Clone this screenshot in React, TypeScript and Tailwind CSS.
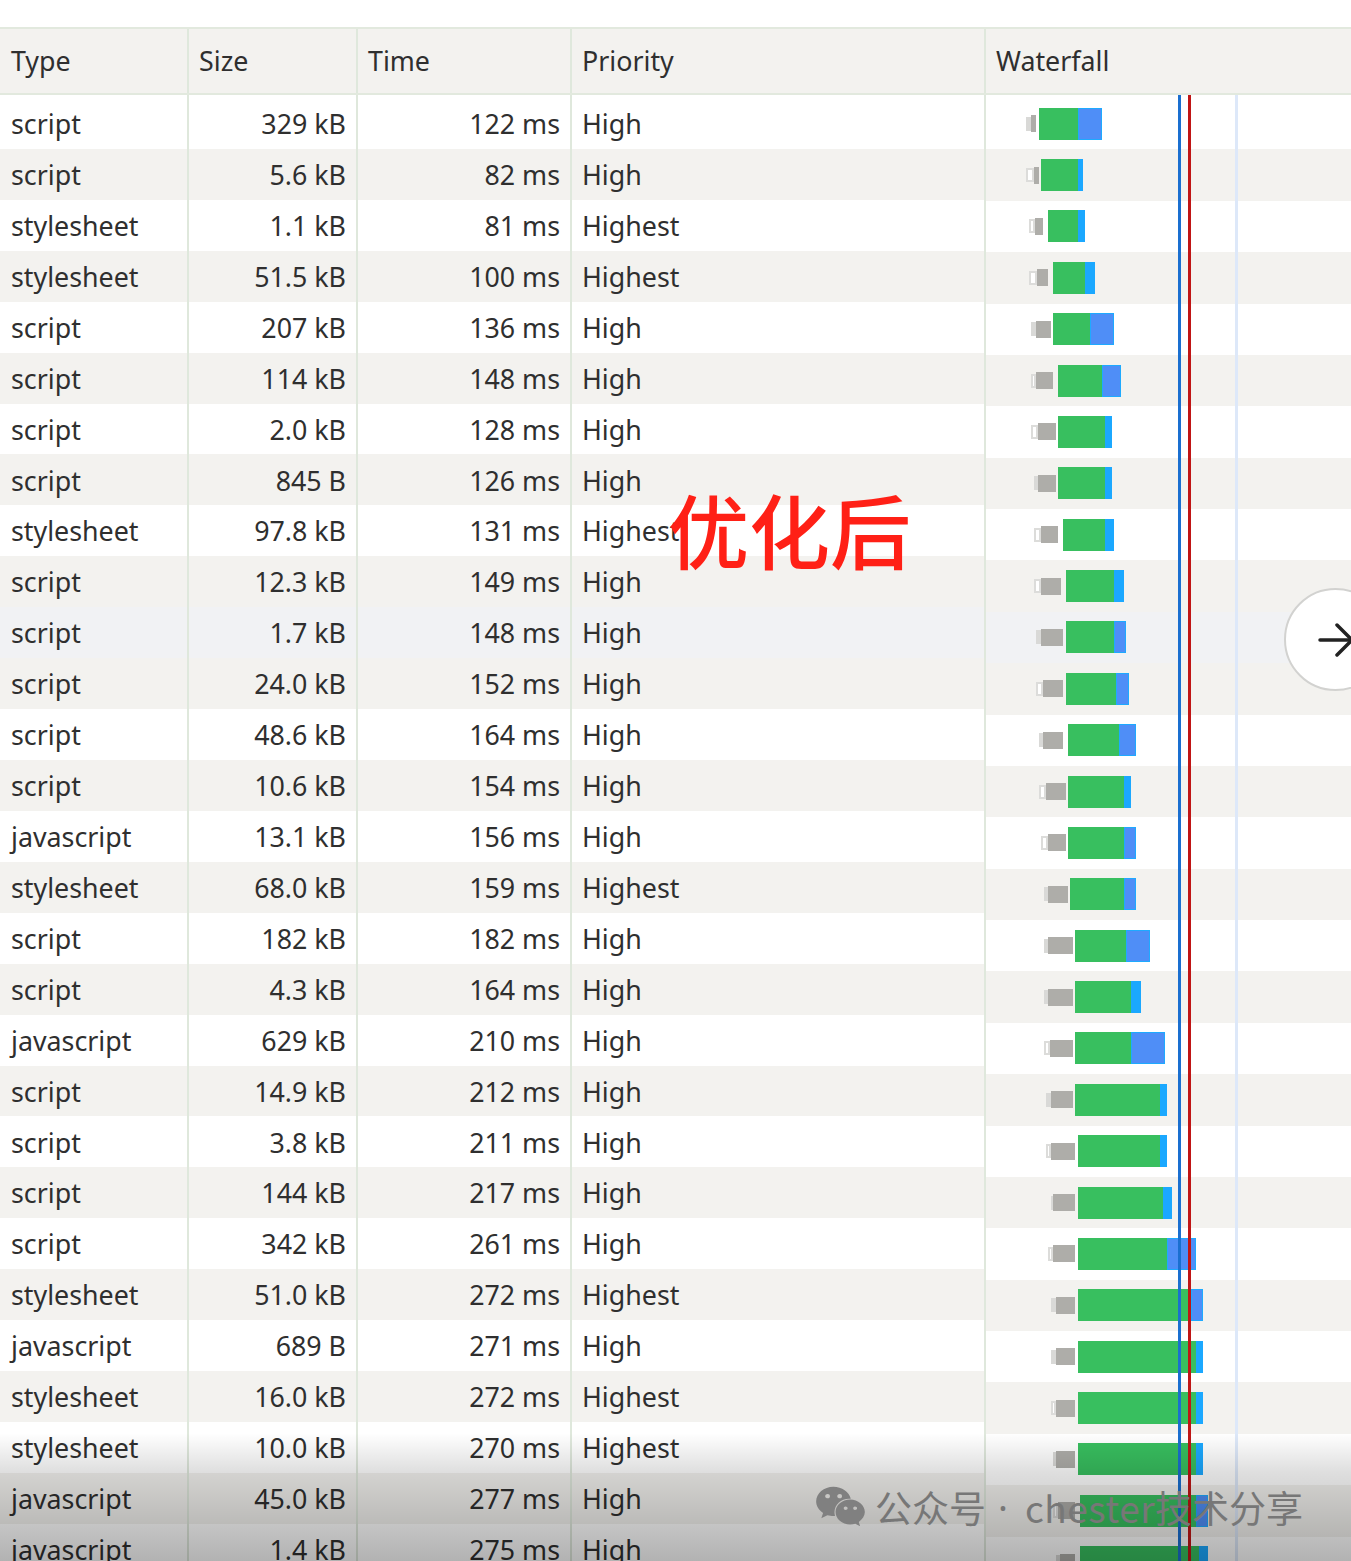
import { FaWeixin } from "react-icons/fa"

// type, size, time, priority, then waterfall: kind, light start, gray start, gray end, green start, green end, blue end
type Row = [string, string, string, string, "solid" | "ring", number, number, number, number, number, number]

const rows: Row[] = [
  ["script", "329 kB", "122 ms", "High", "solid", 1026, 1031, 1036, 1039, 1078, 1102],
  ["script", "5.6 kB", "82 ms", "High", "ring", 1026, 1034, 1039, 1041, 1078, 1083],
  ["stylesheet", "1.1 kB", "81 ms", "Highest", "ring", 1029, 1035, 1043, 1048, 1078, 1085],
  ["stylesheet", "51.5 kB", "100 ms", "Highest", "ring", 1029, 1037, 1048, 1053, 1085, 1095],
  ["script", "207 kB", "136 ms", "High", "solid", 1031, 1036, 1051, 1053, 1090, 1114],
  ["script", "114 kB", "148 ms", "High", "ring", 1031, 1036, 1053, 1058, 1102, 1121],
  ["script", "2.0 kB", "128 ms", "High", "ring", 1031, 1038, 1056, 1058, 1105, 1112],
  ["script", "845 B", "126 ms", "High", "solid", 1034, 1038, 1056, 1058, 1105, 1112],
  ["stylesheet", "97.8 kB", "131 ms", "Highest", "ring", 1034, 1041, 1058, 1063, 1105, 1114],
  ["script", "12.3 kB", "149 ms", "High", "ring", 1034, 1041, 1061, 1066, 1114, 1124],
  ["script", "1.7 kB", "148 ms", "High", "solid", 1036, 1041, 1063, 1066, 1114, 1126],
  ["script", "24.0 kB", "152 ms", "High", "ring", 1036, 1043, 1063, 1066, 1116, 1129],
  ["script", "48.6 kB", "164 ms", "High", "solid", 1039, 1043, 1063, 1068, 1119, 1136],
  ["script", "10.6 kB", "154 ms", "High", "ring", 1039, 1046, 1066, 1068, 1124, 1131],
  ["javascript", "13.1 kB", "156 ms", "High", "ring", 1041, 1048, 1066, 1068, 1124, 1136],
  ["stylesheet", "68.0 kB", "159 ms", "Highest", "solid", 1044, 1048, 1068, 1070, 1124, 1136],
  ["script", "182 kB", "182 ms", "High", "solid", 1044, 1048, 1073, 1075, 1126, 1150],
  ["script", "4.3 kB", "164 ms", "High", "solid", 1044, 1048, 1073, 1075, 1131, 1141],
  ["javascript", "629 kB", "210 ms", "High", "ring", 1044, 1050, 1073, 1075, 1131, 1165],
  ["script", "14.9 kB", "212 ms", "High", "solid", 1046, 1051, 1073, 1075, 1160, 1167],
  ["script", "3.8 kB", "211 ms", "High", "ring", 1046, 1051, 1075, 1078, 1160, 1167],
  ["script", "144 kB", "217 ms", "High", "solid", 1051, 1053, 1075, 1078, 1163, 1172],
  ["script", "342 kB", "261 ms", "High", "ring", 1048, 1053, 1075, 1078, 1167, 1196],
  ["stylesheet", "51.0 kB", "272 ms", "Highest", "solid", 1051, 1056, 1075, 1078, 1191, 1203],
  ["javascript", "689 B", "271 ms", "High", "solid", 1051, 1056, 1075, 1078, 1196, 1203],
  ["stylesheet", "16.0 kB", "272 ms", "Highest", "ring", 1051, 1056, 1075, 1078, 1196, 1203],
  ["stylesheet", "10.0 kB", "270 ms", "Highest", "solid", 1053, 1056, 1075, 1078, 1196, 1203],
  ["javascript", "45.0 kB", "277 ms", "High", "ring", 1053, 1058, 1075, 1080, 1196, 1208],
  ["javascript", "1.4 kB", "275 ms", "High", "solid", 1056, 1060, 1075, 1080, 1199, 1208],
]

const HOVER = 10
const line = "border-r-2 border-[#dfe8dc]"

function band(i: number) {
  if (i === HOVER) return "bg-[#f1f2f4]"
  return i % 2 === 1 ? "bg-[#f3f2ef]" : "bg-white"
}

function Bar({ r }: { r: Row }) {
  const [, , , , kind, light, gray, grayEnd, green, greenEnd, blueEnd] = r
  const blue = blueEnd - greenEnd
  return (
    <div className="flex items-center" style={{ marginLeft: light - 986 }}>
      {kind === "ring" ? (
        <div className="h-[14px] border-2 border-[#dcdcda] bg-white" style={{ width: gray - light }} />
      ) : (
        <div className="h-[14px] bg-[#d9d9d7]" style={{ width: gray - light }} />
      )}
      <div className="h-[17px] bg-[#aeada9]" style={{ width: grayEnd - gray }} />
      <div style={{ width: green - grayEnd }} />
      <div className="h-[32px] bg-[#38bf5f]" style={{ width: greenEnd - green }} />
      <div
        className={blue < 12 ? "h-[32px] bg-[#1ba8ff]" : "h-[32px] border border-[#1eaaff] bg-[#4f8ef7]"}
        style={{ width: blue }}
      />
    </div>
  )
}

export default function App() {
  return (
    <div className="relative h-[1561px] w-[1351px] overflow-hidden bg-white pt-[27px] font-['Noto_Sans',sans-serif] text-[26.8px] text-[#2f2f2f]">
      <div className="flex h-[68px] items-stretch border-y-2 border-[#e2e9de] bg-[#f3f2ef]">
        <div className={`w-[189px] pl-[11px] leading-[64px] ${line}`}>Type</div>
        <div className={`w-[169px] pl-[10px] leading-[64px] ${line}`}>Size</div>
        <div className={`w-[214px] pl-[10px] leading-[64px] ${line}`}>Time</div>
        <div className={`w-[414px] pl-[10px] leading-[64px] ${line}`}>Priority</div>
        <div className="flex-1 pl-[10px] leading-[64px]">Waterfall</div>
      </div>

      <div className="flex">
        <div className="w-[986px] shrink-0">
          <div className="flex h-[3px]">
            <div className={`w-[189px] ${line}`} />
            <div className={`w-[169px] ${line}`} />
            <div className={`w-[214px] ${line}`} />
            <div className={`w-[414px] ${line}`} />
          </div>
          {rows.map((r, i) => (
            <div key={i} className={`flex h-[50.93px] items-center leading-none ${band(i)}`}>
              <div className={`flex h-full w-[189px] items-center pl-[11px] pt-[2px] ${line}`}>{r[0]}</div>
              <div className={`flex h-full w-[169px] items-center justify-end pr-[10px] pt-[2px] ${line}`}>{r[1]}</div>
              <div className={`flex h-full w-[214px] items-center justify-end pr-[10px] pt-[2px] ${line}`}>{r[2]}</div>
              <div className={`flex h-full w-[414px] items-center pl-[10px] pt-[2px] ${line}`}>{r[3]}</div>
            </div>
          ))}
        </div>
        <div className="flex-1 pt-[3px]">
          {rows.map((r, i) => (
            <div key={i} className={`flex h-[51.39px] items-center ${band(i)}`}>
              <Bar r={r} />
            </div>
          ))}
        </div>
      </div>

      {/* timing markers */}
      <div className="absolute bottom-0 left-[1178px] top-[95px] w-[3px] bg-[#1a6fd0]" />
      <div className="absolute bottom-0 left-[1188px] top-[95px] w-[3px] bg-[#c01515]" />
      <div className="absolute bottom-0 left-[1235px] top-[95px] w-[3px] bg-[#dde8f9]" />

      <div className="absolute left-[668px] top-[476px] font-['Noto_Sans_CJK_SC',sans-serif] text-[81px] font-medium leading-[104px] text-[#ff2016]">
        优化后
      </div>

      <div className="absolute left-[1284px] top-[588px] size-[103px] rounded-full border-2 border-[#d2d2d0] bg-white">
        <svg className="absolute left-[31px] top-[31px]" width="38" height="38" viewBox="0 0 38 38" fill="none" stroke="#222" strokeWidth="3.5" strokeLinecap="round" strokeLinejoin="round">
          <path d="M3 19H36" />
          <path d="M20 4 35 19 20 34" />
        </svg>
      </div>

      {/* bottom shade behind the watermark */}
      <div className="absolute inset-x-0 bottom-0 h-[128px] bg-[linear-gradient(to_bottom,rgba(0,0,0,0)_0%,rgba(0,0,0,0.13)_31%,rgba(0,0,0,0.3)_100%)]" />

      <div className="absolute left-[815px] top-[1481px] flex items-center font-['Noto_Sans_CJK_SC',sans-serif] text-[37px] leading-[50px] text-[#777777]">
        <FaWeixin className="mr-[9px] size-[51px] text-[#808080]" />
        <span>公众号</span>
        <span className="ml-[8px] mr-[13px] w-[18px] text-center font-['Noto_Sans',sans-serif]">·</span>
        <span className="tracking-[0.5px]">chester</span>
        <span>技术分享</span>
      </div>
    </div>
  )
}
